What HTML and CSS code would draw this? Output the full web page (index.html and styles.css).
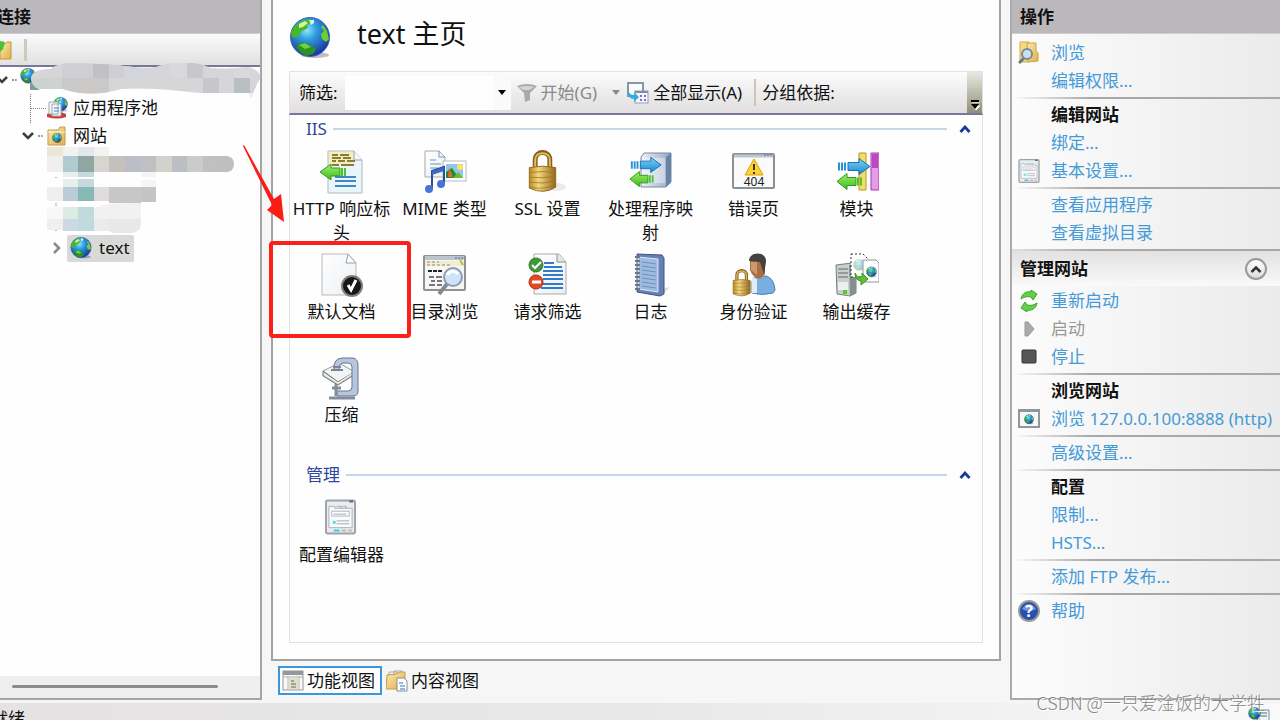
FILE: index.html
```html
<!DOCTYPE html>
<html lang="zh-CN">
<head>
<meta charset="utf-8">
<title>text 主页</title>
<link rel="stylesheet" href="styles.css">
</head>
<body>
<svg class="defs" aria-hidden="true">
  <defs>
    <radialGradient id="sea" cx=".42" cy=".32" r=".7"><stop offset="0" stop-color="#8fe6fb"/><stop offset=".35" stop-color="#2f9fe0"/><stop offset="1" stop-color="#1c2f9c"/></radialGradient>
    <linearGradient id="gold" x1="0" x2="1"><stop offset="0" stop-color="#b98a26"/><stop offset=".35" stop-color="#f3d77e"/><stop offset="1" stop-color="#94671a"/></linearGradient>
    <linearGradient id="folder" x1="0" y1="0" x2="1" y2="1"><stop offset="0" stop-color="#fbe9ad"/><stop offset="1" stop-color="#dfb04d"/></linearGradient>
    <linearGradient id="paper" x1="0" y1="0" x2="1" y2="1"><stop offset="0" stop-color="#fff"/><stop offset="1" stop-color="#eceff2"/></linearGradient>
    <linearGradient id="steel" x1="0" x2="1"><stop offset="0" stop-color="#edf2f9"/><stop offset="1" stop-color="#94a7c6"/></linearGradient>
    <linearGradient id="blueArrow" x1="0" y1="0" x2="0" y2="1"><stop offset="0" stop-color="#7cd3f7"/><stop offset="1" stop-color="#1c86cf"/></linearGradient>
    <linearGradient id="greenArrow" x1="0" y1="0" x2="0" y2="1"><stop offset="0" stop-color="#a4f06a"/><stop offset="1" stop-color="#3dbb1d"/></linearGradient>
    <symbol id="globe" viewBox="0 0 42 42">
      <ellipse cx="26" cy="38" rx="14" ry="3" fill="#000" opacity=".25"/>
      <circle cx="21" cy="20" r="19.500" fill="url(#sea)" stroke="#3a62b8"/>
      <path d="M3 13C7 6 13 3 20 2l3 3-5 3 1 3-6 3-3 4-4 3-3-1C2 17 2 15 3 13z" fill="#46b828"/>
      <path d="M10 7l6-3 3 2-5 4-4 1z" fill="#d7f59a"/>
      <path d="M20 3h5v3l-3 2z" fill="#d9f3ee"/>
      <path d="M8 27l7-2 7 3 5 4-3 5-7 2-6-4-3-4z" fill="#2a9423"/>
      <path d="M10 28l6-2 6 4-6 2z" fill="#6fcf55"/>
      <path d="M34 8l4 6 2 8-3 3-4-3-1-5 3-3-3-4z" fill="#6fd02d"/>
    </symbol>
    <symbol id="swap" viewBox="0 0 36 33">
      <path d="M12 5h11V1l11 8-11 8v-4H12z" fill="url(#blueArrow)" stroke="#1b71b4"/>
      <path d="M3 5v8M6 5v8M9 5v8" stroke="#2793d8" stroke-width="2"/>
      <path d="M20 20H11v-4L1 24l10 8v-4h9z" fill="url(#greenArrow)" stroke="#319b1c"/>
      <path d="M22 20v8M25 20v8" stroke="#4cc431" stroke-width="2"/>
    </symbol>
    <symbol id="config" viewBox="0 0 32 36">
      <rect x="1" y="1" width="30" height="34" rx="2" fill="#e9edf0" stroke="#9ea2a6" stroke-width="2"/>
      <path d="M25 2h4" stroke="#4f6b91" stroke-width="2"/>
      <path d="M4 7h6v2h18v20H4z" fill="#f8fafb" stroke="#a9afbb"/>
      <path d="M12 7h5v2M18 7h4v2" fill="none" stroke="#a9afbb"/>
      <rect x="7" y="12" width="18" height="5" fill="#fff" stroke="#afb5bd"/>
      <path d="M9 15h13M12 22h13M12 25h13" stroke="#a2a8ae"/>
      <path d="M8 22h3v3H8z" fill="#58d8ef"/>
      <path d="M9 32h6" stroke="#36c7ec" stroke-width="2"/><path d="M17 32h5M24 32h4" stroke="#bbb" stroke-width="2"/>
    </symbol>
    <symbol id="lock" viewBox="0 0 30 44">
      <path d="M7 22V10c0-10 15-10 15 0v12" fill="none" stroke="#876019" stroke-width="5"/>
      <path d="M7 22V10c0-9 15-9 15 0v12" fill="none" stroke="#dfbd62" stroke-width="2"/>
      <path d="M1 18q14-3 27 0v20q-12 8-27 1z" fill="url(#gold)" stroke="#93681d"/>
      <path d="M2 23q13-2 25 0M2 28q13 1 25-1M2 33q13 2 25-1M2 38q13 3 25-2" fill="none" stroke="#99701f" opacity=".75"/>
    </symbol>
    <symbol id="up" viewBox="0 0 12 8"><path d="M1.500 7L6 2l4.500 5" fill="none" stroke="#173d9c" stroke-width="2.800"/></symbol>
    <symbol id="down" viewBox="0 0 14 10"><path d="M2 2l5 5 5-5" fill="none" stroke="#3e3e3e" stroke-width="2.500"/></symbol>
  </defs>
</svg>

<main class="workspace">
  <section class="connections">
    <h2 class="pane-title pane-title-cut">连接</h2>
    <div class="tree-toolbar">
      <svg width="12" height="20" viewBox="0 0 12 20"><path d="M0 4h5l2-2h4v17H0z" fill="url(#folder)" stroke="#c49a3e"/><path d="M0 1l5 1-2 7-3 3z" fill="#48c335"/></svg>
      <span class="tree-divider"></span>
    </div>
    <ul class="tree">
      <li class="node level-0">
        <svg class="twist" viewBox="0 0 14 10"><use href="#down"/></svg>
        <span class="dots"></span>
        <svg class="node-icon" viewBox="0 0 22 24"><use href="#globe" x="0" y="0" width="16" height="16"/><path d="M10 14h9v8h-9z" fill="#8299a2"/><path d="M15 17h3v3h-3z" fill="#75dd37"/></svg>
      </li>
      <li class="node level-1">
        <span class="dots dots-wide"></span>
        <svg class="node-icon" viewBox="0 0 22 24"><use href="#globe" x="7" y="0" width="15" height="17"/><path d="M1 18q10-5 19 0v3q-9 3-19 0z" fill="#c73d38"/><path d="M3 6h9v12H3zM6 8h9v12H6z" fill="#f4f7f8" stroke="#a1aab0"/><path d="M8 12h5M8 15h5" stroke="#4a82cc"/></svg>
        <span>应用程序池</span>
      </li>
      <li class="node level-1 sites">
        <svg class="twist" viewBox="0 0 14 10"><use href="#down"/></svg>
        <span class="dots"></span>
        <svg class="node-icon" viewBox="0 0 22 22"><path d="M2 5h10l2-3h5v18H2z" fill="url(#folder)" stroke="#c59a48"/><path d="M2 7h17" stroke="#fff4ca"/><use href="#globe" x="6" y="8" width="10" height="10"/></svg>
        <span>网站</span>
      </li>
      <li class="node"></li>
      <li class="node"></li>
      <li class="node"></li>
      <li class="node level-2">
        <svg class="twist" viewBox="0 0 10 14"><path d="M2 2l5 5-5 5" fill="none" stroke="#888" stroke-width="2.500"/></svg>
        <span class="node-selected"><svg width="22" height="22"><use href="#globe"/></svg>text</span>
      </li>
    </ul>
    <svg class="mask mask-root" viewBox="0 0 230 36">
      <clipPath id="rootClip"><path d="M0 14C2 8 10 6 20 6c6-7 24-6 50-5 20 0 38 6 55 3 14-6 44-6 54 1 14 1 30 0 38-1 12 3 15 10 10 15l-7 16-2-5h-48c-20-2-50-6-80-4-20 6-40 6-58 0H8C3 24 0 20 0 14z"/></clipPath>
      <g clip-path="url(#rootClip)">
        <path d="M0 0h230v36H0z" fill="#d6d5d7"/>
        <path d="M31 0h31v15H31zM78 0h15v15H78z" fill="#cfced5"/><path d="M62 0h16v15H62z" fill="#c2c0c4"/><path d="M93 0h32v15H93z" fill="#d4d5da"/><path d="M140 0h16v15h-16zM203 0h16v15h-16z" fill="#d9d8df"/><path d="M156 0h16v15h-16z" fill="#c9c7ca"/>
        <path d="M0 15h16v20H0z" fill="#ccd2cf"/><path d="M16 15h15v20H16z" fill="#cfd3cf"/><path d="M31 15h47v20H31z" fill="#cbc9c7"/><path d="M172 15h16v20h-16z" fill="#c6c7cc"/><path d="M203 15h16v16h-16z" fill="#b9c0c2"/>
        <path d="M203 30h20v6h-20z" fill="#eee"/>
      </g>
    </svg>
    <svg class="mask mask-sites" viewBox="0 0 188 86">
      <path d="M0 0h16v9H0z" fill="#ece6d5"/><path d="M16 0h15v9H16zM47 0h15v9H47z" fill="#f2f3f1"/><path d="M31 0h16v9H31z" fill="#e3e8ea"/>
      <path d="M0 9h16v16H0z" fill="#efefef"/><path d="M16 9h15v16H16z" fill="#b0cad1"/><path d="M31 9h16v16H31z" fill="#90a6a3"/><path d="M47 9h15v16H47z" fill="#d8d5d1"/><path d="M62 9h16v16H62z" fill="#c4c1bd"/><path d="M78 9h16v16H78z" fill="#bbbec7"/><path d="M94 9h15v16H94z" fill="#c0bfc4"/><path d="M109 9h16v16h-16z" fill="#d2d1cc"/><path d="M125 9h15v16h-15z" fill="#bbbfc5"/><path d="M140 9h16v16h-16z" fill="#cbcbca"/><path d="M156 9h15v16h-15z" fill="#c2bfc2"/><path d="M171 9h9q7 1 7 8t-7 8h-9z" fill="#bfbfbf"/>
      <path d="M16 25h15v5H16zM16 32h15v8H16z" fill="#e5f0ea"/><path d="M31 25h16v5H31zM31 32h16v8H31z" fill="#c8d8df"/><path d="M94 25h15v5H94zM94 33h15v7H94z" fill="#f5f5f4"/>
      <path d="M0 40h16v14H0z" fill="#efefef"/><path d="M16 40h15v14H16z" fill="#b9ccd8"/><path d="M31 40h16v14H31z" fill="#85bab7"/><path d="M47 40h15v14H47z" fill="#dfdbdf"/><path d="M62 40h32v16H62z" fill="#c7c6c8"/><path d="M94 40h15v15H94z" fill="#c3c5c5"/>
      <path d="M0 60h16v12H0z" fill="#f8f8f8"/><path d="M16 60h15v12H16z" fill="#dcebe3"/><path d="M31 60h16v24H31z" fill="#c1dade"/><path d="M47 62q8-6 30-6h17v16H47z" fill="#f1f1f1"/><path d="M0 72h16v11H0z" fill="#efefef"/><path d="M16 72h15v12H16z" fill="#ccd8e3"/><path d="M47 72h15v12H47z" fill="#ebebeb"/><path d="M62 72h32v6q-2 8-10 8H66l-4-2z" fill="#e7e8e8"/>
      <path d="M9 30v2M9 56v4M9 83v2" stroke="#777" stroke-dasharray="1 1"/>
    </svg>
    <div class="scroll-space"><span class="scroll-thumb"></span></div>
  </section>

  <section class="center">
    <div class="feature-view">
      <header class="page-head">
        <svg width="42" height="42"><use href="#globe"/></svg>
        <h1>text 主页</h1>
      </header>
      <div class="filter-bar">
        <label for="filter">筛选:</label>
        <span class="combo"><input id="filter" type="text"><button type="button" aria-label="筛选历史"><svg width="8" height="5" viewBox="0 0 8 5"><path d="M0 0h8L4 5z"/></svg></button></span>
        <button type="button" class="tool muted" disabled>
          <svg width="20" height="18" viewBox="0 0 20 18"><path d="M0 2q10-4 20 0l-7 7v7l-5 2-1-9z" fill="#aaa"/><path d="M2 3q8-2 15 0l-5 3H6z" fill="#d5d5d5"/></svg>开始(G)
        </button>
        <svg class="tool-arrow" viewBox="0 0 8 5"><path d="M0 0h8L4 5z" fill="#888"/></svg>
        <button type="button" class="tool">
          <svg width="22" height="22" viewBox="0 0 22 22"><rect x="1" y="1" width="15" height="13" fill="#fafbfc" stroke="#8995a5" stroke-width="2"/><rect x="8" y="9" width="13" height="12" fill="#f5f6fc" stroke="#969fae"/><path d="M8 10h13" stroke="#7f8fa5" stroke-width="2"/><path d="M13 14h2M17 14h2M13 18h2M17 18h2" stroke="#7774c4" stroke-width="2"/><path d="M1 7c1 5 3 6 6 6v-3l5 5-5 5v-3C2 17 0 13 1 7z" fill="#35aae0"/></svg>全部显示(A)
        </button>
        <span class="bar-divider"></span>
        <span>分组依据:</span>
        <button type="button" class="overflow" aria-label="更多"><svg width="10" height="10" viewBox="0 0 10 10"><path d="M2 2h8M3 6h7L6 10z" fill="#fff" stroke="#fff"/><path d="M1 1h8" stroke="#000" stroke-width="2"/><path d="M1 4h8L5 9z" fill="#000"/></svg></button>
      </div>
      <div class="feature-list">
        <section class="group">
          <h2 class="group-title"><span>IIS</span><i></i><button type="button" aria-label="折叠"><svg width="12" height="8"><use href="#up"/></svg></button></h2>
          <div class="items">
            <a class="item" href="#"><svg viewBox="0 0 44 44"><path d="M8 1h26l8 9v33H8z" fill="#e8f6fa" stroke="#aeb9bd"/><path d="M34 1v9h8" fill="#f7f7f7" stroke="#9c9e9f"/><path d="M9 2h24v13H9z" fill="#f7eeb4"/><path d="M12 5h6M20 5h9M12 8h9M23 8h8M12 11h4M18 11h7M27 11h8M12 15h7M21 15h13" stroke="#857d3f" stroke-width="2"/><path d="M15 27h21M15 31h21M15 36h21" stroke="#3f87c9" stroke-width="2"/><path d="M20 18h-9v-4L0 22l11 8v-4h9z" fill="url(#greenArrow)" stroke="#319b1c"/><path d="M22 18v8M25 18v8" stroke="#48c332" stroke-width="2"/></svg><span>HTTP 响应标头</span></a>
            <a class="item" href="#"><svg viewBox="0 0 44 44"><path d="M2 1h14l6 6v20H2z" fill="url(#paper)" stroke="#a5a9ad"/><path d="M16 1v6h6M7 10h6M7 14h11M7 18h8" fill="none" stroke="#6c94c3"/><rect x="20" y="11" width="23" height="20" fill="#fff" stroke="#b5bac0"/><path d="M23 14h17v14H23z" fill="#8ec9ed"/><circle cx="37" cy="17" r="3" fill="#ffe35e"/><path d="M23 28v-6l6-4 7 10z" fill="#218d27"/><path d="M26 17l4 10h-5z" fill="#e16a28"/><path d="M30 28l5-6 5 6z" fill="#6dbb2e"/><path d="M9 39V21l12-4v18" fill="none" stroke="#294da4" stroke-width="2"/><path d="M9 21l12-4v4L9 25z" fill="#3e69c2"/><ellipse cx="6" cy="39" rx="4" ry="4" fill="#4776d1"/><ellipse cx="18" cy="34" rx="4" ry="4" fill="#4776d1"/></svg><span>MIME 类型</span></a>
            <a class="item" href="#"><svg viewBox="0 0 44 44"><ellipse cx="31" cy="37" rx="9" ry="4" fill="#999" opacity=".2"/><use href="#lock" x="2" y="0" width="30" height="43"/></svg><span>SSL 设置</span></a>
            <a class="item" href="#"><svg viewBox="0 0 44 44"><path d="M15 3h27v29l-5 5H12V7z" fill="url(#steel)" stroke="#7d879e"/><path d="M37 7l5-4v29l-5 5z" fill="#6982a8"/><path d="M13 8h23v25H13z" fill="#fff" opacity=".4"/><use href="#swap" x="0" y="5" width="34" height="34"/></svg><span>处理程序映射</span></a>
            <a class="item" href="#"><svg viewBox="0 0 44 44"><rect x="1" y="4" width="41" height="34" rx="1" fill="#fafafa" stroke="#8c9096" stroke-width="2"/><path d="M2 6h39" stroke="#bdc5ce" stroke-width="3"/><path d="M32 5h8" stroke="#536b8c" stroke-dasharray="2 1"/><path d="M22 9l9 16H13z" fill="#ffd42e" stroke="#d5a211"/><path d="M22 14v6M22 22v2" stroke="#40350d" stroke-width="2"/><text x="22" y="36" text-anchor="middle" class="icon-code">404</text></svg><span>错误页</span></a>
            <a class="item" href="#"><svg viewBox="0 0 44 44"><path d="M24 3h7v37h-7z" fill="#f5dd63" stroke="#b6972e" stroke-width="1"/><path d="M36 3h8v37h-8z" fill="#e59be8" stroke="#a738a8" stroke-width="1"/><path d="M37 4h6v14h-6z" fill="#bd48bd"/><use href="#swap" x="1" y="7" width="36" height="34"/></svg><span>模块</span></a>

            <a class="item marked" href="#"><svg viewBox="0 0 44 44"><path d="M2 1h26l8 9v32H2z" fill="url(#paper)" stroke="#b9b9b9"/><path d="M28 1l-2 9h10z" fill="#fff" stroke="#9d9d9d"/><circle cx="32" cy="33" r="11" fill="#7f7f7f"/><circle cx="32" cy="33" r="9" fill="#171717"/><path d="M28 32l3 5 5-10" fill="none" stroke="#fff" stroke-width="3"/></svg><span>默认文档</span></a>
            <a class="item" href="#"><svg viewBox="0 0 44 44"><rect x="1" y="3" width="41" height="34" rx="1" fill="#f6f6f6" stroke="#8d9295" stroke-width="2"/><path d="M2 5h39" stroke="#bac5cf" stroke-width="4"/><path d="M32 5h8" stroke="#506884" stroke-dasharray="2 1"/><path d="M2 8h39v5H2z" fill="#f1edcd"/><path d="M4 9h12M4 12h24" stroke="#8b8b80" stroke-dasharray="3 2"/><path d="M37 7l3 5" stroke="#a8c73f" stroke-width="2"/><path d="M5 18h15" stroke="#222" stroke-width="2" stroke-dasharray="4 1"/><path d="M6 24h5M13 24h6M8 28h4M14 28h5M6 32h6M14 32h5" stroke="#777" stroke-width="2"/><path d="M24 31l-8 10" stroke="#85888c" stroke-width="4"/><circle cx="30" cy="24" r="9" fill="#cce4fa" stroke="#8c9cb5" stroke-width="2"/><path d="M24 22q5-7 11-1" stroke="#fff" stroke-width="3" fill="none"/></svg><span>目录浏览</span></a>
            <a class="item" href="#"><svg viewBox="0 0 44 44"><path d="M8 1h25l7 8v32H8z" fill="url(#paper)" stroke="#aaa"/><path d="M31 1v8h9" fill="#e7e7e7" stroke="#8e8e8e"/><path d="M18 10h10M18 14h18M17 18h20M17 22h20M17 26h20M16 31h21M15 35h22" stroke="#2f7bd0" stroke-width="2"/><circle cx="10" cy="12" r="7" fill="#3c9b38" stroke="#34752b"/><path d="M6 12l3 3 6-6" fill="none" stroke="#fff" stroke-width="2"/><circle cx="10" cy="29" r="7" fill="#e5491f" stroke="#b02b17"/><path d="M6 29h9" stroke="#fff" stroke-width="3"/></svg><span>请求筛选</span></a>
            <a class="item" href="#"><svg viewBox="0 0 44 44"><path d="M33 36l8-2-8 8z" fill="#aaa" opacity=".4"/><path d="M8 1l25 1 2 3v36l-4 2-23-4z" fill="#6480b4" stroke="#40557f"/><path d="M9 4l20 2v33L9 36z" fill="#9fbae0" stroke="#dce6f4"/><path d="M13 9l14 2M13 13l14 2M13 17l14 2M13 21l14 2M13 25l14 2M13 29l14 2M13 33l14 2" stroke="#6d90b8"/><path d="M6 4h5M6 8h5M6 12h5M6 16h5M6 20h5M6 24h5M6 28h5M6 32h5M6 36h5" stroke="#6e7683" stroke-width="2"/></svg><span>日志</span></a>
            <a class="item" href="#"><svg viewBox="0 0 44 44"><path d="M20 40V29q1-6 7-6h7q8 2 9 14l-2 3q-11 3-21 0z" fill="#78afe0" stroke="#477fb5"/><path d="M20 24l5 2v14h-5z" fill="#e0edf7"/><path d="M18 6h15v15l-5 5q-7-1-10-9z" fill="#a86f46"/><path d="M17 8C17-2 35-2 34 9l-2 12-4-12z" fill="#41423d"/><path d="M19 9h6v13l-6-5z" fill="#cf9867"/><use href="#lock" x="0" y="16" width="20" height="28"/></svg><span>身份验证</span></a>
            <a class="item" href="#"><svg viewBox="0 0 44 44"><path d="M1 12l16-2 4 2v28l-6 3-13-2z" fill="#c9cecf" stroke="#777f80"/><path d="M14 12l7-1v29l-6 3z" fill="#858f91"/><path d="M3 16h10M3 20h10M3 24h10" stroke="#666"/><path d="M3 29h10v8H3z" fill="#edf0ed"/><path d="M8 37h4v4H8z" fill="#4dce20"/><path d="M16 1h12l5 5v18H16z" fill="#fff" stroke="#333" stroke-dasharray="2 2"/><use href="#globe" x="18" y="6" width="12" height="12" opacity=".35"/><path d="M28 7h13l3 3v19H28z" fill="#fff" stroke="#8f969a"/><use href="#globe" x="31" y="13" width="11" height="12"/><path d="M20 20q2 5 7 4v-4l6 6-7 6v-4q-6-1-6-8z" fill="#5ac32d" stroke="#38951c"/></svg><span>输出缓存</span></a>
            <a class="item" href="#"><svg viewBox="0 0 44 44"><path d="M3 15l16-8 16 9-17 10z" fill="#f3f4f4" stroke="#999"/><path d="M3 15v5l15 9 16-10v-3L18 26z" fill="#cfd1d3" stroke="#777"/><path d="M4 18l14 9 15-10" fill="none" stroke="#fff"/><path d="M14 14q-1-12 9-12h10q5 1 5 7v26q0 5-5 5H17v-5h11q4 0 4-4V11q0-4-4-4h-5q-4 0-4 7z" fill="#b7c6dc" stroke="#65768d"/><path d="M11 14h12M13 11h8" stroke="#78869a" stroke-width="2"/><path d="M16 28v12M9 42h26M12 32h9" stroke="#838d99" stroke-width="3"/></svg><span>压缩</span></a>
          </div>
        </section>
        <section class="group">
          <h2 class="group-title"><span>管理</span><i></i><button type="button" aria-label="折叠"><svg width="12" height="8"><use href="#up"/></svg></button></h2>
          <div class="items">
            <a class="item" href="#"><svg viewBox="0 0 44 44"><use href="#config" x="5" y="3" width="31" height="36"/></svg><span>配置编辑器</span></a>
          </div>
        </section>
      </div>
    </div>
    <div class="view-tabs">
      <button type="button" class="tab current"><svg width="22" height="21" viewBox="0 0 22 21"><rect x="1" y="1" width="20" height="19" fill="#f8f8f8" stroke="#92969b"/><path d="M1 3h20" stroke="#92989f" stroke-width="4"/><path d="M1 7h20M6 6v14M17 6v14" stroke="#b3b3b3"/><path d="M7 8h9v11H7z" fill="#e2dfc9"/><path d="M9 11h3M9 14h5M9 17h5" stroke="#666"/></svg>功能视图</button>
      <button type="button" class="tab"><svg width="22" height="22" viewBox="0 0 22 22"><path d="M3 2h8v10H3zM8 1h8v10H8z" fill="#f5f5f5" stroke="#aaa"/><path d="M1 5l9-1 4-2h5v17H0z" fill="url(#folder)" stroke="#c49b44"/><path d="M11 8h7l3 3v10H11z" fill="#fff" stroke="#858d96"/><path d="M13 13h4M14 16h5M14 19h5" stroke="#326cbc"/></svg>内容视图</button>
    </div>
  </section>

  <aside class="actions">
    <h2 class="pane-title">操作</h2>
    <div class="action-group first">
      <a class="action" href="#"><svg viewBox="0 0 22 24"><path d="M2 1h9v20H2z" fill="#f4d982" stroke="#d5ab43"/><path d="M9 2h9v8l2 2v8l-10 1z" fill="url(#folder)" stroke="#cda442"/><path d="M7 16l-6 6" stroke="#6c7581" stroke-width="3"/><circle cx="9" cy="13" r="5" fill="#cae0ec" stroke="#78899a" stroke-width="2"/></svg>浏览</a>
      <a class="action" href="#"><i></i>编辑权限...</a>
    </div>
    <div class="action-group">
      <h3 class="action"><i></i>编辑网站</h3>
      <a class="action" href="#"><i></i>绑定...</a>
      <a class="action" href="#"><svg viewBox="0 0 22 24"><use href="#config" width="22" height="24"/></svg>基本设置...</a>
    </div>
    <div class="action-group">
      <a class="action" href="#"><i></i>查看应用程序</a>
      <a class="action" href="#"><i></i>查看虚拟目录</a>
    </div>
    <div class="manage-head"><h2>管理网站</h2><button type="button" aria-label="折叠"><svg width="12" height="8" viewBox="0 0 12 8"><path d="M1.500 7L6 2.500 10.500 7" fill="none" stroke="#333" stroke-width="2.500"/></svg></button></div>
    <div class="action-group plain">
      <a class="action" href="#"><svg viewBox="0 0 22 24"><path d="M3 10c1-6 6-8 10-7V1l6 4-4 6-2-3C9 7 6 8 3 10z" fill="#65cf49" stroke="#3ba42a"/><path d="M19 14c-1 6-6 8-10 7v2l-6-4 4-6 2 3c4 1 7 0 10-2z" fill="#65cf49" stroke="#3ba42a"/></svg>重新启动</a>
      <span class="action off"><svg viewBox="0 0 22 24"><path d="M7 5l3 0 6 7-6 7H7z" fill="#aaa" stroke="#999"/></svg>启动</span>
      <a class="action" href="#"><svg viewBox="0 0 22 24"><rect x="4" y="5" width="14" height="13" rx="1" fill="#565656" stroke="#333"/></svg>停止</a>
    </div>
    <div class="action-group">
      <h3 class="action"><i></i>浏览网站</h3>
      <a class="action" href="#"><svg viewBox="0 0 22 24"><rect x="1" y="3" width="20" height="17" fill="#f7f7f7" stroke="#8f969e" stroke-width="2"/><path d="M1 4h20" stroke="#8b95a3" stroke-width="2"/><use href="#globe" x="6" y="7" width="10" height="11"/></svg>浏览 127.0.0.100:8888 (http)</a>
    </div>
    <div class="action-group">
      <a class="action" href="#"><i></i>高级设置...</a>
    </div>
    <div class="action-group">
      <h3 class="action"><i></i>配置</h3>
      <a class="action" href="#"><i></i>限制...</a>
      <a class="action" href="#"><i></i>HSTS...</a>
    </div>
    <div class="action-group">
      <a class="action" href="#"><i></i>添加 FTP 发布...</a>
    </div>
    <div class="action-group">
      <a class="action" href="#"><svg viewBox="0 0 22 24"><circle cx="11" cy="12" r="10" fill="#2851ae" stroke="#9a9a9a" stroke-width="2"/><path d="M4 10q7-10 14 0-7 4-14 0z" fill="#7796db"/><text x="11" y="18" text-anchor="middle" class="icon-help">?</text></svg>帮助</a>
    </div>
  </aside>
</main>
<footer class="status"><span>就绪</span><svg width="22" height="22" viewBox="0 0 22 22"><path d="M9 3h12v12H9z" fill="#eef4f7" stroke="#7b8f9c"/><path d="M12 6h7M12 9h7" stroke="#456e8a"/><use href="#globe" x="0" y="0" width="13" height="13"/></svg></footer>

<svg class="arrow" viewBox="0 0 44 78" aria-hidden="true"><path d="M1 0l30 54 7-5 3 28L24 65l5-5L0 1z" fill="#fb1d14"/></svg>
<div class="watermark">CSDN @一只爱淦饭的大学牲</div>
</body>
</html>
```

FILE: styles.css
```css
* { box-sizing: border-box; }

body {
  margin: 0;
  height: 100vh;
  overflow: hidden;
  display: flex;
  flex-direction: column;
  position: relative;
  background: #f6f6f6;
  color: #111;
  font-family: "Noto Sans", "Noto Sans CJK SC", sans-serif;
  font-size: 17px;
  line-height: 24px;
}

h1, h2, h3, ul { margin: 0; padding: 0; font-size: inherit; }
ul { list-style: none; }
a { color: inherit; text-decoration: none; }
button, input { font: inherit; color: inherit; border: 0; padding: 0; background: none; }
svg { display: block; flex-shrink: 0; }
.defs { position: absolute; width: 0; height: 0; }

.workspace { flex: 1; min-height: 0; display: flex; padding-bottom: 3px; }

.pane-title {
  height: 34px;
  padding: 5px 8px 4px;
  background: #bbb8bb;
  border-bottom: 1px solid #cfcdcf;
  font-weight: 700;
}
.pane-title-cut { padding-left: 0; text-indent: -3px; }

/* Connections */
.connections {
  flex: 0 0 262px;
  position: relative;
  display: flex;
  flex-direction: column;
  background: #fefefe;
  border-right: 2px solid #a5a5a5;
  border-bottom: 2px solid #a5a5a5;
}
.tree-toolbar {
  height: 33px;
  display: flex;
  align-items: center;
  gap: 12px;
  background: linear-gradient(#fbfbfb, #e2e0e1);
  border-bottom: 2px solid #77779a;
}
.tree-divider { width: 3px; height: 22px; background: #cbcabb; }
.tree { flex: 1; margin-top: -1px; }
.node { height: 28px; display: flex; align-items: center; }
.node-icon { width: 22px; height: 24px; margin-right: 5px; }
.twist { width: 14px; height: 14px; }
.level-0 { padding-left: 0; }
.level-0 .twist { margin-left: -5px; }
.level-0 .node-icon { margin-left: 0; }
.level-1 { padding-left: 29px; }
.sites { padding-left: 21px; }
.level-2 { padding-left: 50px; gap: 3px; }
.dots { width: 5px; margin: 0 3px; border-top: 2px dotted #999; }
.dots-wide {
  width: 16px;
  height: 29px;
  margin: 0 0 0 1px;
  border-top: 0;
  border-left: 1px dotted #777;
  background: linear-gradient(90deg, #888 50%, transparent 50%) 0 14px / 2px 1px repeat-x;
}
.node-selected {
  height: 27px;
  display: flex;
  align-items: center;
  gap: 7px;
  padding: 0 4px 0 3px;
  border-radius: 2px;
  background: #d9d9d9;
}
.mask { position: absolute; }
.mask-root { left: 31px; top: 63px; width: 230px; height: 36px; }
.mask-sites { left: 47px; top: 147px; width: 188px; height: 86px; }
.scroll-space { height: 22px; padding: 9px 42px 0 12px; background: #efefef; }
.scroll-thumb { display: block; height: 3px; border-radius: 2px; background: #8b8b8b; }

/* Center */
.center { flex: 1; min-width: 0; margin: 0 9px; display: flex; flex-direction: column; }
.feature-view {
  flex: 1;
  min-height: 0;
  display: flex;
  flex-direction: column;
  padding: 0 16px 16px;
  background: #fefefe;
  border: solid #a3a3a3;
  border-width: 0 2px 2px;
}
.page-head { height: 71px; display: flex; align-items: center; gap: 26px; }
.page-head svg { margin-top: 4px; }
.page-head h1 { margin-top: -4px; font-size: 27px; font-weight: 400; line-height: 36px; }
.filter-bar {
  height: 44px;
  display: flex;
  align-items: center;
  padding-left: 9px;
  border: 1px solid #e2e2e2;
  border-bottom: 2px solid #77779a;
  background: linear-gradient(#fcfcfc, #e0dedf);
}
.combo { width: 166px; height: 34px; margin: 0 6px 0 7px; display: flex; background: #fefefe; }
.combo input { flex: 1; min-width: 0; outline: 0; }
.combo button { width: 17px; padding-left: 4px; background: #fafafa; }
.tool { display: flex; align-items: center; gap: 4px; white-space: nowrap; }
.muted { color: #8a8a8a; }
.tool-arrow { width: 8px; height: 5px; margin: 0 7px 0 15px; }
.bar-divider { width: 2px; height: 27px; margin: 0 6px 0 12px; background: #c9c8b5; }
.overflow {
  align-self: stretch;
  width: 15px;
  margin-left: auto;
  display: flex;
  align-items: flex-end;
  justify-content: center;
  padding-bottom: 3px;
  background: linear-gradient(#e9e9e4, #8f8f74);
}
.feature-list { flex: 1; border: 1px solid #e0e0e0; border-top: 0; padding-top: 2px; }
.group { margin-bottom: 4px; }
.group-title {
  display: flex;
  align-items: center;
  gap: 6px;
  padding: 0 11px 0 16px;
  color: #2f479d;
  font-weight: 400;
}
.group-title i { flex: 1; height: 2px; margin-right: 6px; background: #c7d5ec; }
.items {
  display: grid;
  grid-template-columns: repeat(auto-fill, 103px);
  grid-auto-rows: minmax(103px, auto);
  padding: 9px 50px 0 0;
}
.item { position: relative; display: flex; flex-direction: column; align-items: center; gap: 3px; padding: 0 2px; text-align: center; }
.item svg { width: 44px; height: 44px; }
.item span { word-break: break-all; }
.marked::after {
  content: "";
  position: absolute;
  inset: -12px -18px 18px -21px;
  border: 4px solid #fb2018;
  border-radius: 4px;
}
.icon-code { font: 12px "Noto Sans", sans-serif; fill: #222; }
.icon-help { font: 700 16px "Noto Sans", sans-serif; fill: #fff; }

.view-tabs { display: flex; padding: 5px 0 5px 7px; }
.tab { height: 29px; display: flex; align-items: center; gap: 3px; padding: 0 5px 0 2px; border: 2px solid transparent; }
.current { border-color: #3b96dc; background: #fdfdfd; }

/* Actions */
.actions {
  flex: 0 0 270px;
  border-left: 2px solid #aaa;
  border-bottom: 2px solid #aaa;
  background: linear-gradient(90deg, #fcfcfc, #ebebeb);
}
.action-group { padding: 4px 0 2px; }
.action-group:not(.first):not(.plain) {
  background: linear-gradient(90deg, transparent, #a8a8a8 30%) 0 0 / 100% 2px no-repeat;
}
.first { padding-top: 5px; }
.plain { padding-top: 0; }
.action { height: 28px; display: flex; align-items: center; gap: 11px; padding-left: 6px; color: #449ad7; white-space: nowrap; }
.action svg, .action i { width: 22px; height: 24px; flex-shrink: 0; }
h3.action { color: #111; font-weight: 700; }
.off { color: #999; }
.manage-head {
  height: 37px;
  display: flex;
  align-items: center;
  justify-content: space-between;
  padding: 2px 13px 0 8px;
  margin-bottom: 1px;
  background: linear-gradient(90deg, transparent, #a8a8a8 30%) 0 0 / 100% 2px no-repeat, linear-gradient(#e1dfe0, #fafafa);
}
.manage-head button {
  width: 22px;
  height: 22px;
  display: grid;
  place-items: center;
  border: 2px solid #9a9a9a;
  border-radius: 50%;
  background: linear-gradient(#fff, #ddd);
}

.status {
  height: 17px;
  display: flex;
  justify-content: space-between;
  padding: 4px 10px 0 0;
  overflow: hidden;
  background: linear-gradient(90deg, #e4e2e3, #e9e8e8 50%, #f9f9f9);
}
.status span { text-indent: -9px; }

.arrow { position: absolute; left: 243px; top: 145px; width: 44px; height: 78px; }
.watermark {
  position: absolute;
  right: 15px;
  bottom: 6px;
  color: #858585;
  font-family: "Noto Sans CJK SC", sans-serif;
  font-size: 18px;
  font-weight: 300;
  text-shadow: 1px 1px 0 #fff;
}
```
